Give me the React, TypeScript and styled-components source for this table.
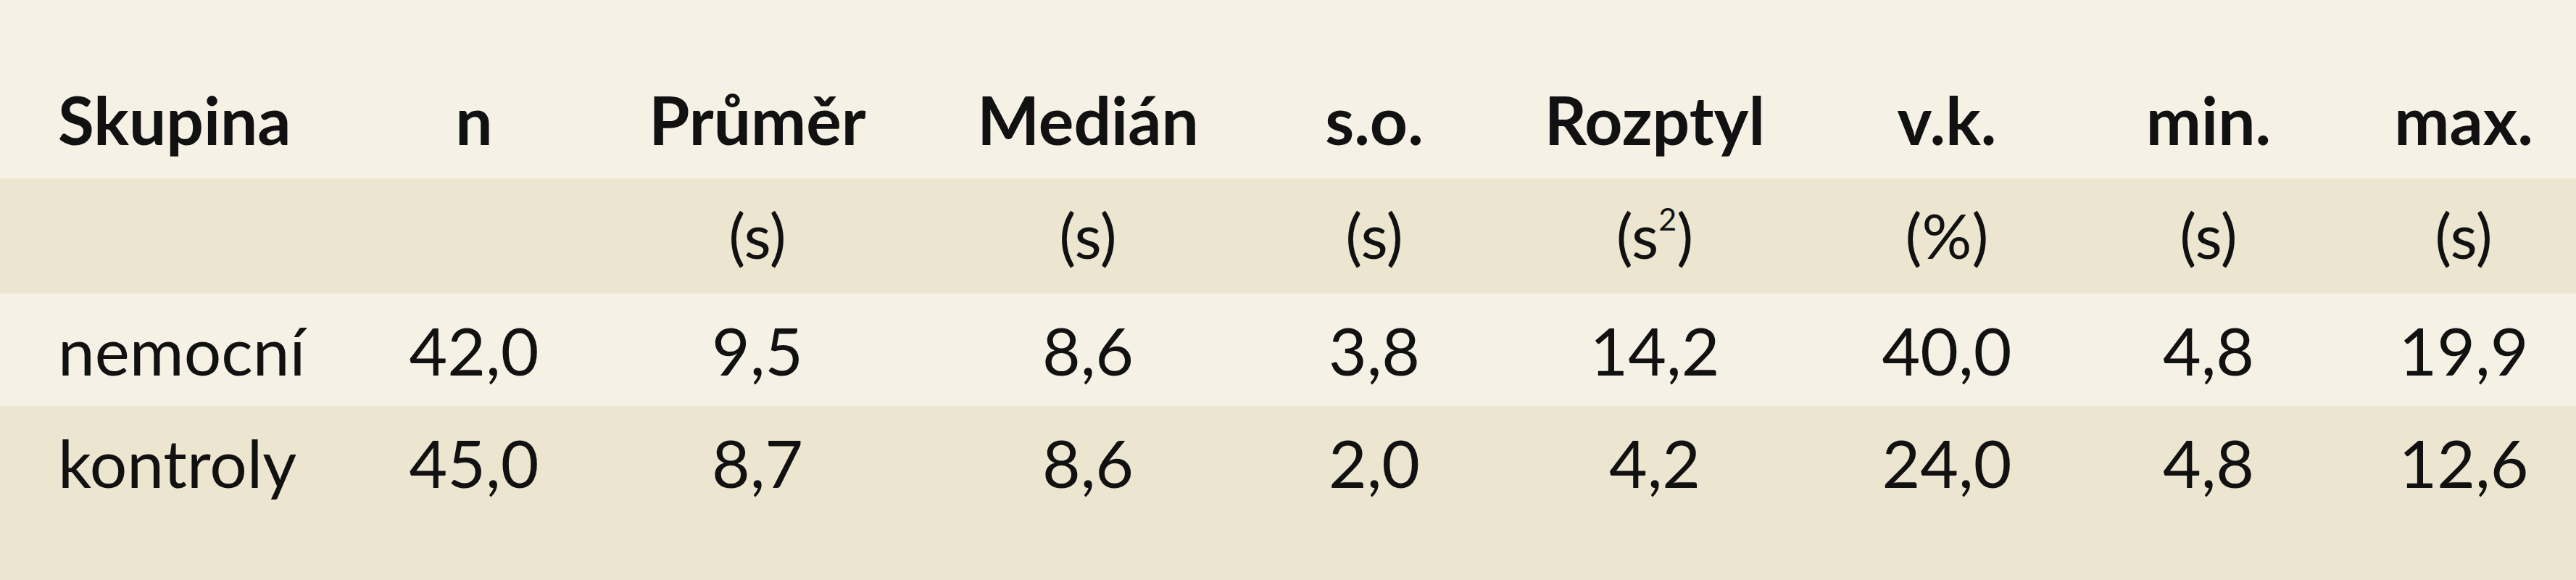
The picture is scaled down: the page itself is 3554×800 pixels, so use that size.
import styled, { createGlobalStyle } from "styled-components";

const GlobalStyle = createGlobalStyle`
  html, body {
    margin: 0;
    padding: 0;
    background: #ece5d0;
  }
  body {
    font-family: Lato, "Open Sans", sans-serif;
    color: #111111;
  }
`;

const COLUMNS = "390px 368px 414px 498px 292px 482px 324px 398px 306px";

const Table = styled.div`
  display: flex;
  flex-direction: column;
  width: 3554px;
  height: 800px;
  background-color: #ece5d0;
`;

const Row = styled.div<{ $tone: "light" | "dark"; $top: number; $height: number }>`
  display: grid;
  grid-template-columns: ${COLUMNS};
  box-sizing: border-box;
  height: ${(p) => p.$height}px;
  padding: ${(p) => p.$top}px 0 0 80px;
  background-color: ${(p) => (p.$tone === "light" ? "#f5f1e5" : "transparent")};
`;

const HeadCell = styled.div<{ $left?: boolean }>`
  font-size: 91px;
  font-weight: 700;
  line-height: 91px;
  text-align: ${(p) => (p.$left ? "left" : "center")};
  white-space: nowrap;
`;

const UnitCell = styled.div`
  font-size: 86px;
  font-weight: 400;
  line-height: 86px;
  text-align: center;
  white-space: nowrap;
`;

const DataCell = styled.div<{ $left?: boolean }>`
  font-size: 91px;
  font-weight: 400;
  line-height: 91px;
  text-align: ${(p) => (p.$left ? "left" : "center")};
  white-space: nowrap;
`;

const Sup = styled.sup`
  font-size: 0.5em;
  line-height: 0;
  vertical-align: 0.9em;
`;

const headers = ["n", "Průměr", "Medián", "s.o.", "Rozptyl", "v.k.", "min.", "max."];

const rows = [
  { group: "nemocní", values: ["42,0", "9,5", "8,6", "3,8", "14,2", "40,0", "4,8", "19,9"] },
  { group: "kontroly", values: ["45,0", "8,7", "8,6", "2,0", "4,2", "24,0", "4,8", "12,6"] },
];

const App = () => {
  return (
    <>
      <GlobalStyle />
      <Table>
        <Row $tone="light" $top={119} $height={246}>
          <HeadCell $left>Skupina</HeadCell>
          {headers.map((h) => (
            <HeadCell key={h}>{h}</HeadCell>
          ))}
        </Row>
        <Row $tone="dark" $top={35} $height={159}>
          <UnitCell />
          <UnitCell />
          <UnitCell>(s)</UnitCell>
          <UnitCell>(s)</UnitCell>
          <UnitCell>(s)</UnitCell>
          <UnitCell>
            (s<Sup>2</Sup>)
          </UnitCell>
          <UnitCell>(%)</UnitCell>
          <UnitCell>(s)</UnitCell>
          <UnitCell>(s)</UnitCell>
        </Row>
        {rows.map((r, i) => (
          <Row key={r.group} $tone={i % 2 === 0 ? "light" : "dark"} $top={32} $height={155}>
            <DataCell $left>{r.group}</DataCell>
            {r.values.map((v, j) => (
              <DataCell key={j}>{v}</DataCell>
            ))}
          </Row>
        ))}
      </Table>
    </>
  );
};

export default App;
